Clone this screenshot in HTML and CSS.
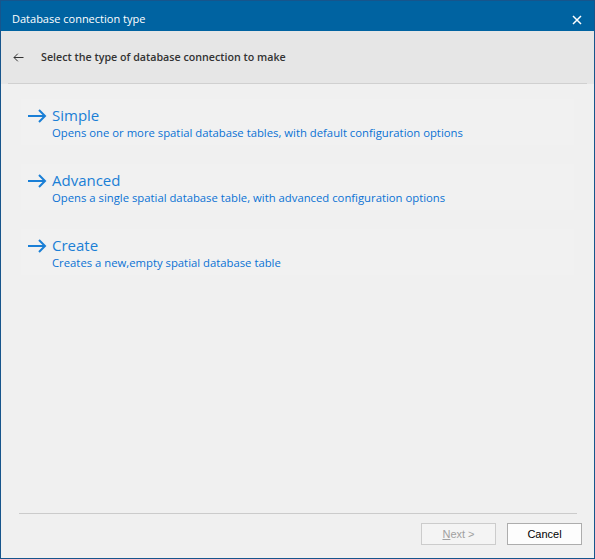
FILE: index.html
```html
<!DOCTYPE html>
<html lang="en">
<head>
    <meta charset="UTF-8">
    <title>Database connection type</title>
    <link rel="stylesheet" href="styles.css">
</head>
<body>
    <div class="window">
        <div class="titlebar">
            <span class="title">Database connection type</span>
            <svg class="close" width="10" height="10" viewBox="0 0 10 10">
                <path d="M1 1 L9 9 M9 1 L1 9" stroke="#fff" stroke-width="1.5" fill="none"/>
            </svg>
        </div>

        <div class="header">
            <svg class="back" width="11" height="9" viewBox="0 0 11 9">
                <path d="M10.5 4.5 H1 M4.8 0.7 L1 4.5 L4.8 8.3" stroke="#333" stroke-width="1" fill="none"/>
            </svg>
            <span class="header-text">Select the type of database connection to make</span>
        </div>

        <div class="options">
            <div class="option">
                <svg class="arrow" width="19" height="14" viewBox="0 0 19 14">
                    <path d="M0 7 H17 M11 1 L17 7 L11 13" stroke="#1a7fd6" stroke-width="2" fill="none"/>
                </svg>
                <div class="option-text">
                    <div class="option-title">Simple</div>
                    <div class="option-desc">Opens one or more spatial database tables, with default configuration options</div>
                </div>
            </div>
            <div class="option">
                <svg class="arrow" width="19" height="14" viewBox="0 0 19 14">
                    <path d="M0 7 H17 M11 1 L17 7 L11 13" stroke="#1a7fd6" stroke-width="2" fill="none"/>
                </svg>
                <div class="option-text">
                    <div class="option-title">Advanced</div>
                    <div class="option-desc">Opens a single spatial database table, with advanced configuration options</div>
                </div>
            </div>
            <div class="option">
                <svg class="arrow" width="19" height="14" viewBox="0 0 19 14">
                    <path d="M0 7 H17 M11 1 L17 7 L11 13" stroke="#1a7fd6" stroke-width="2" fill="none"/>
                </svg>
                <div class="option-text">
                    <div class="option-title">Create</div>
                    <div class="option-desc">Creates a new,empty spatial database table</div>
                </div>
            </div>
        </div>

        <div class="footer">
            <div class="footer-line"></div>
            <div class="buttons">
                <button class="btn disabled"><u>N</u>ext &gt;</button>
                <button class="btn">Cancel</button>
            </div>
        </div>
    </div>
</body>
</html>
```

FILE: styles.css
```css
body {
    margin: 0;
    padding: 0;
    font-family: "Open Sans", "Noto Sans", sans-serif;
}

.window {
    width: 595px;
    height: 559px;
    box-sizing: border-box;
    border: 1px solid #17558c;
    background-color: #f0f0f0;
    display: flex;
    flex-direction: column;
}

.titlebar {
    height: 30px;
    background-color: #0063a1;
    color: #fff;
    display: flex;
    align-items: center;
    justify-content: space-between;
    padding: 0 11px 0 11px;
    flex-shrink: 0;
}

.title {
    font-size: 11px;
    margin-top: 5px;
}

.close {
    margin-top: 7px;
    margin-right: 1px;
}

.header {
    height: 53px;
    background-color: #e6e6e6;
    display: flex;
    align-items: center;
    padding-left: 12px;
    position: relative;
    flex-shrink: 0;
}

/* separator under the header, inset from the edges */
.header::after {
    content: "";
    position: absolute;
    left: 7px;
    right: 7px;
    bottom: 0;
    height: 1px;
    background-color: #d0d0d0;
}

.back {
    margin-right: 17px;
    margin-top: -1px;
}

.header-text {
    font-size: 10.7px;
    font-weight: 600;
    color: #333;
    margin-top: -2px;
}

.options {
    display: flex;
    flex-direction: column;
    gap: 19px;
    padding: 15px 20px 0 20px;
    flex-grow: 1;
}

.option {
    height: 46px;
    background-color: #f1f1f1;
    display: flex;
    align-items: flex-start;
    padding-left: 7px;
    box-sizing: border-box;
}

.arrow {
    margin-top: 10px;
    margin-right: 5px;
    flex-shrink: 0;
}

.option-title {
    font-size: 15px;
    color: #1a7fd6;
    line-height: 20px;
    margin-top: 6px;
}

.option-desc {
    font-size: 11.3px;
    color: #0a72d4;
    line-height: 16px;
}

.footer {
    padding: 0 12px 13px 18px;
    flex-shrink: 0;
}

.footer-line {
    height: 1px;
    background-color: #cbcbcb;
    margin-right: 5px;
    margin-bottom: 9px;
}

.buttons {
    display: flex;
    justify-content: flex-end;
    gap: 11px;
}

.btn {
    width: 75px;
    height: 22px;
    font-family: "Liberation Sans", Arial, sans-serif;
    font-size: 11px;
    color: #000;
    background-color: #fdfdfd;
    border: 1px solid #adadad;
    padding: 0;
}

.btn.disabled {
    color: #a0a0a0;
    border-color: #cccccc;
    background-color: #f4f4f4;
}
```
